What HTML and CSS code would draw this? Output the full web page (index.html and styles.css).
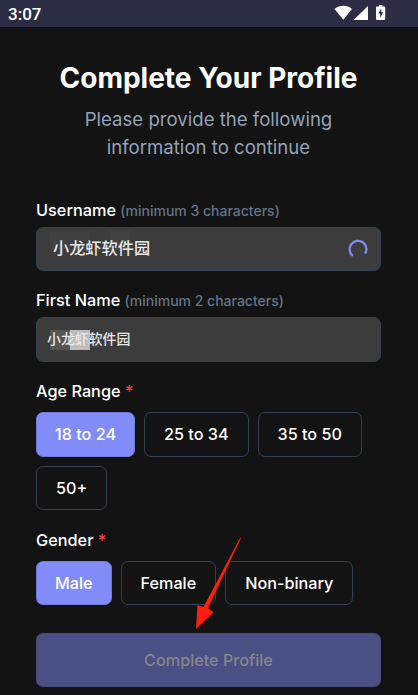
FILE: index.html
```html
<!DOCTYPE html>
<html lang="en">
<head>
    <meta charset="UTF-8">
    <meta name="viewport" content="width=device-width, initial-scale=1.0">
    <title>Complete Your Profile</title>
    <link rel="stylesheet" href="styles.css">
</head>
<body>
    <header class="status-bar">
        <span class="time">3:07</span>
        <svg class="status-icons" width="54" height="18" viewBox="0 0 54 18" fill="#fff">
            <path d="M0.5 5C5.5 0.8 13 0.8 18 5L9.3 15.8Z"/>
            <path d="M19.5 16L34 2V16Z"/>
            <path d="M45 2.500V1H48.500V2.500H50.200Q51.200 2.500 51.200 3.500V15Q51.200 16 50.200 16H43Q42 16 42 15V3.500Q42 2.500 43 2.500Z"/>
            <path d="M47.300 4.500L44.300 9.500H46.200V13.500L49.200 8.300H47.300Z" fill="#2c2d45"/>
        </svg>
    </header>

    <main class="profile">
        <h1>Complete Your Profile</h1>
        <p class="subtitle">Please provide the following<br>information to continue</p>

        <div class="field">
            <div class="label">Username <span class="hint">(minimum 3 characters)</span></div>
            <div class="input username">
                <span class="value">小龙虾软件园</span>
                <svg class="spinner" width="20" height="20" viewBox="0 0 20 20" fill="none" stroke="#818cf8" stroke-width="2.200">
                    <path d="M4.800 16.800A8.400 8.400 0 1 1 17.100 14.700"/>
                </svg>
            </div>
        </div>

        <div class="field">
            <div class="label">First Name <span class="hint">(minimum 2 characters)</span></div>
            <div class="input first-name">
                <span class="value">小龙虾软件园</span>
            </div>
        </div>

        <div class="field">
            <div class="label options-label">Age Range <span class="required">*</span></div>
            <div class="options">
                <button class="option selected">18 to 24</button>
                <button class="option">25 to 34</button>
                <button class="option">35 to 50</button>
                <button class="option">50+</button>
            </div>
        </div>

        <div class="field">
            <div class="label options-label">Gender <span class="required">*</span></div>
            <div class="options">
                <button class="option selected">Male</button>
                <button class="option">Female</button>
                <button class="option">Non-binary</button>
            </div>
        </div>

        <button class="submit" disabled>Complete Profile</button>
    </main>

    <!-- Arrow pointing at the submit button -->
    <svg class="arrow" width="50" height="94" viewBox="0 0 50 94" fill="#ff1e12">
        <path d="M45 1H46L13 71L18.500 75.500L1 92L2.500 68L8.500 70Z"/>
    </svg>
</body>
</html>
```

FILE: styles.css
```css
* {
    box-sizing: border-box;
}

body {
    margin: 0;
    height: 695px;
    overflow: hidden;
    position: relative;
    background-color: #131313;
    color: #fff;
    font-family: Inter, "Noto Sans CJK SC", sans-serif;
}

.status-bar {
    display: flex;
    justify-content: space-between;
    height: 27px;
    padding: 4px 30px 0 8px;
    background-color: #2c2d45;
}

.time {
    font-family: Roboto, sans-serif;
    font-size: 17px;
    font-weight: 500;
    line-height: 20px;
}

.profile {
    padding: 33px 37px 0 36px;
}

h1 {
    margin: 0;
    font-size: 28px;
    font-weight: 700;
    line-height: 36px;
    text-align: center;
    white-space: nowrap;
}

.subtitle {
    margin: 9px 0 38.5px;
    color: #94a3b8;
    font-size: 18.6px;
    line-height: 28px;
    text-align: center;
}

.field {
    margin-bottom: 19.5px;
}

.label {
    margin-bottom: 6px;
    font-size: 16.3px;
    font-weight: 500;
    line-height: 20px;
    white-space: nowrap;
}

.options-label {
    margin-bottom: 10.8px;
}

.hint {
    color: #64748b;
    font-size: 14px;
}

.required {
    color: #ef4444;
}

.input {
    display: flex;
    align-items: center;
    justify-content: space-between;
    height: 44.4px;
    border: 1px solid #334155;
    border-radius: 7px;
    background-color: #3c3c3c;
    background-repeat: no-repeat;
    color: #e8e8e8;
    font-weight: 500;
}

.value {
    margin-top: -3px;
}

.username {
    padding: 0 12px 0 16px;
    font-size: 16.2px;
    background-image: linear-gradient(#404040, #404040), linear-gradient(#424242, #424242);
    background-position: 13px 3px, 73px 3px;
    background-size: 40px 20px, 20px 20px;
}

.first-name {
    padding: 0 11px 0 10px;
    font-size: 13.9px;
    background-image: linear-gradient(#bdbdbd, #bdbdbd), linear-gradient(#555, #555);
    background-position: 33px 12px, 13px 12px;
    background-size: 20px 20px;
}

.options {
    display: flex;
    flex-wrap: wrap;
    gap: 9px;
}

.option {
    height: 44.6px;
    padding: 0 19px;
    border: 1px solid #334155;
    border-radius: 7px;
    background: none;
    color: #fff;
    font-family: inherit;
    font-size: 16.2px;
    font-weight: 500;
}

.selected {
    padding: 0 18px;
    background-color: #818cf8;
    border-color: #6f79d6;
}

.submit {
    display: block;
    width: 100%;
    height: 54px;
    margin-top: 27.5px;
    border: 1px solid #4a4d78;
    border-radius: 7px;
    background-color: #4a4f84;
    color: #85858d;
    font-family: inherit;
    font-size: 16.2px;
    font-weight: 500;
}

.arrow {
    position: absolute;
    left: 195px;
    top: 537px;
}
```
